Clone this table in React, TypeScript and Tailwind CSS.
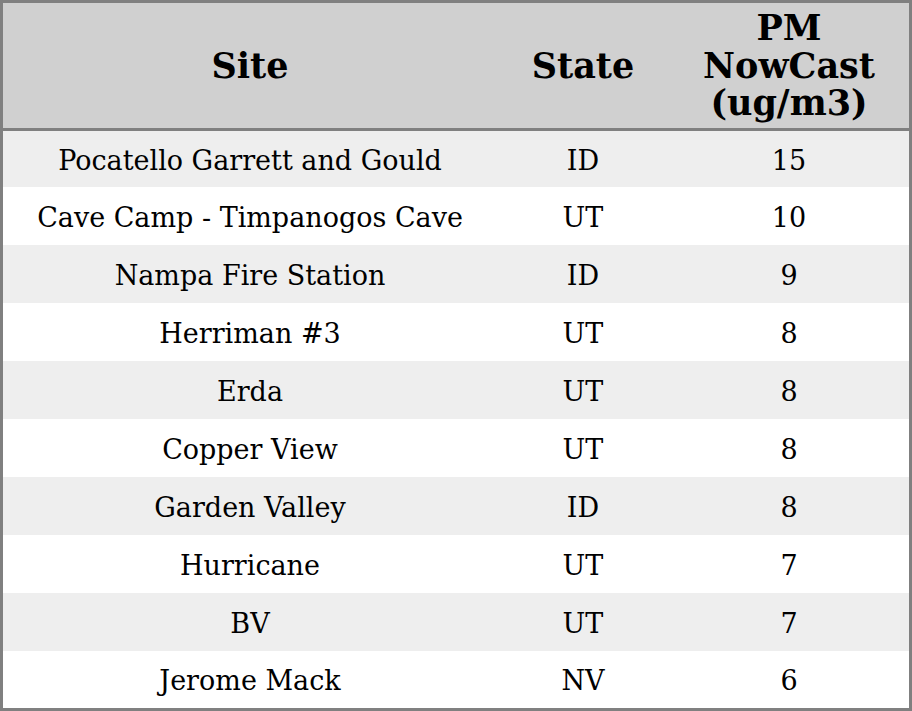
import type { FC } from "react";

type Row = { site: string; state: string; value: number };

const rows: Row[] = [
  { site: "Pocatello Garrett and Gould", state: "ID", value: 15 },
  { site: "Cave Camp - Timpanogos Cave", state: "UT", value: 10 },
  { site: "Nampa Fire Station", state: "ID", value: 9 },
  { site: "Herriman #3", state: "UT", value: 8 },
  { site: "Erda", state: "UT", value: 8 },
  { site: "Copper View", state: "UT", value: 8 },
  { site: "Garden Valley", state: "ID", value: 8 },
  { site: "Hurricane", state: "UT", value: 7 },
  { site: "BV", state: "UT", value: 7 },
  { site: "Jerome Mack", state: "NV", value: 6 },
];

const cols = "grid grid-cols-[494px_172px_240px]";

// Top sites by PM NowCast
const NowCastTable: FC = () => {
  return (
    <div className="w-[912px] h-[711px] border-[3px] border-[#808080] bg-white font-['DejaVu_Serif',serif] text-black flex flex-col overflow-hidden">
      <div className={`${cols} h-[128px] shrink-0 bg-[#d0d0d0] border-b-[3px] border-[#808080] text-[35px] font-bold leading-[37.5px] text-center`}>
        <div className="flex items-center justify-center">Site</div>
        <div className="flex items-center justify-center">State</div>
        <div className="flex items-center justify-center">
          PM
          <br />
          NowCast
          <br />
          (ug/m3)
        </div>
      </div>
      {rows.map((r, i) => (
        <div
          key={i}
          className={`${cols} ${i === 0 ? "h-[56px] shrink-0" : i === rows.length - 1 ? "flex-1" : "h-[58px] shrink-0"} ${
            i % 2 === 0 ? "bg-[#eeeeee]" : "bg-white"
          } text-[27px] leading-[32px] text-center`}
        >
          <div className="flex items-center justify-center pt-[3px]">{r.site}</div>
          <div className="flex items-center justify-center pt-[3px]">{r.state}</div>
          <div className="flex items-center justify-center pt-[3px]">{r.value}</div>
        </div>
      ))}
    </div>
  );
};

export default function App() {
  return <NowCastTable />;
}
